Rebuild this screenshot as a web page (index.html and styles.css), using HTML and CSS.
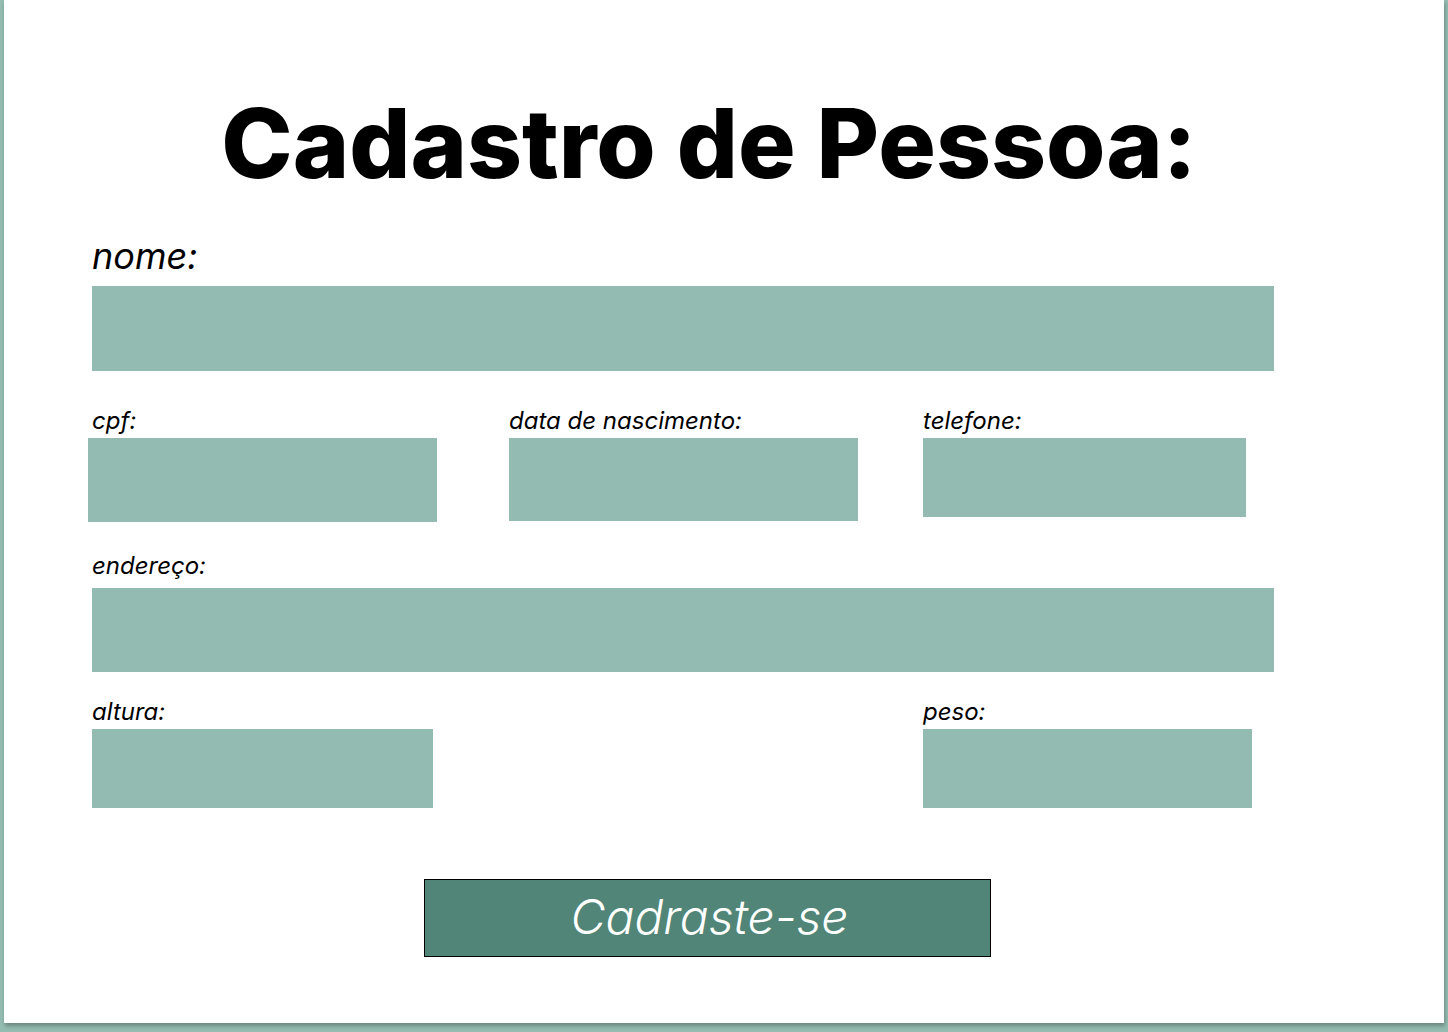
FILE: index.html
```html
<!DOCTYPE html>
<html lang="pt">
<head>
<meta charset="utf-8">
<title>Cadastro de Pessoa</title>
<link rel="stylesheet" href="styles.css">
</head>
<body>
<main class="card">
  <h1 class="title">Cadastro de Pessoa:</h1>
  <form class="form">
    <label class="label label-big" for="nome">nome:</label>
    <input class="field field-full field-nome" id="nome" type="text">

    <div class="row row-1">
      <div class="col col-a">
        <label class="label" for="cpf">cpf:</label>
        <input class="field field-cpf" id="cpf" type="text">
      </div>
      <div class="col col-b">
        <label class="label" for="nasc">data de nascimento:</label>
        <input class="field field-nasc" id="nasc" type="text">
      </div>
      <div class="col col-c">
        <label class="label" for="tel">telefone:</label>
        <input class="field field-tel" id="tel" type="text">
      </div>
    </div>

    <label class="label label-end" for="end">endereço:</label>
    <input class="field field-full field-end" id="end" type="text">

    <div class="row row-2">
      <div class="col col-a">
        <label class="label" for="alt">altura:</label>
        <input class="field field-alt" id="alt" type="text">
      </div>
      <div class="col col-c2">
        <label class="label" for="peso">peso:</label>
        <input class="field field-peso" id="peso" type="text">
      </div>
    </div>

    <div class="actions">
      <button class="btn" type="button">Cadraste-se</button>
    </div>
  </form>
</main>
</body>
</html>
```

FILE: styles.css
```css
html, body {
  margin: 0;
  padding: 0;
}

body {
  background: #94bcb1;
  width: 1448px;
  height: 1032px;
  overflow: hidden;
  font-family: Inter, "Noto Sans", sans-serif;
  color: #000;
}

.card {
  box-sizing: border-box;
  margin-left: 4px;
  width: 1440px;
  height: 1023px;
  background: #fff;
  box-shadow: 1px 3px 4px rgba(0, 0, 0, 0.28);
  padding: 95px 0 0 88px;
}

.title {
  margin: 0 0 43px -88px;
  padding-right: 30px;
  font-size: 96px;
  line-height: 96px;
  font-weight: 800;
  text-align: center;
  letter-spacing: 0;
}

.form {
  display: flex;
  flex-direction: column;
  align-items: flex-start;
}

.label {
  display: block;
  font-style: italic;
  font-weight: 400;
  font-size: 24px;
  line-height: 29px;
  margin-bottom: 3px;
}

.label-big {
  font-size: 36px;
  line-height: 44px;
  margin-bottom: 8px;
}

.field {
  display: block;
  box-sizing: border-box;
  border: none;
  outline: none;
  margin: 0;
  padding: 0;
  background: #93bbb1;
}

.field-full {
  width: 1182px;
}

.field-nome {
  height: 85px;
}

.row {
  display: flex;
  align-items: flex-start;
}

.row-1 {
  margin-top: 35px;
}

.row-2 {
  margin-top: 25px;
}

.col-a {
  width: 417px;
}

.col-b {
  width: 414px;
}

.col-c2 {
  margin-left: 414px;
}

.field-cpf {
  margin-left: -4px;
  width: 349px;
  height: 84px;
}

.field-nasc {
  width: 349px;
  height: 83px;
}

.field-tel {
  width: 323px;
  height: 79px;
}

.label-end {
  margin-top: 29px;
  margin-bottom: 8px;
}

.field-end {
  height: 84px;
}

.field-alt {
  width: 341px;
  height: 79px;
}

.field-peso {
  width: 329px;
  height: 79px;
}

.actions {
  margin-top: 71px;
  margin-left: 332px;
}

.btn {
  box-sizing: border-box;
  width: 567px;
  height: 78px;
  border: 1px solid #000;
  background: #508577;
  color: #fff;
  font-family: Inter, "Noto Sans", sans-serif;
  font-style: italic;
  font-weight: 300;
  font-size: 48px;
  line-height: 58px;
  padding: 0 0 2px 4px;
  letter-spacing: 0;
  cursor: pointer;
}
```
